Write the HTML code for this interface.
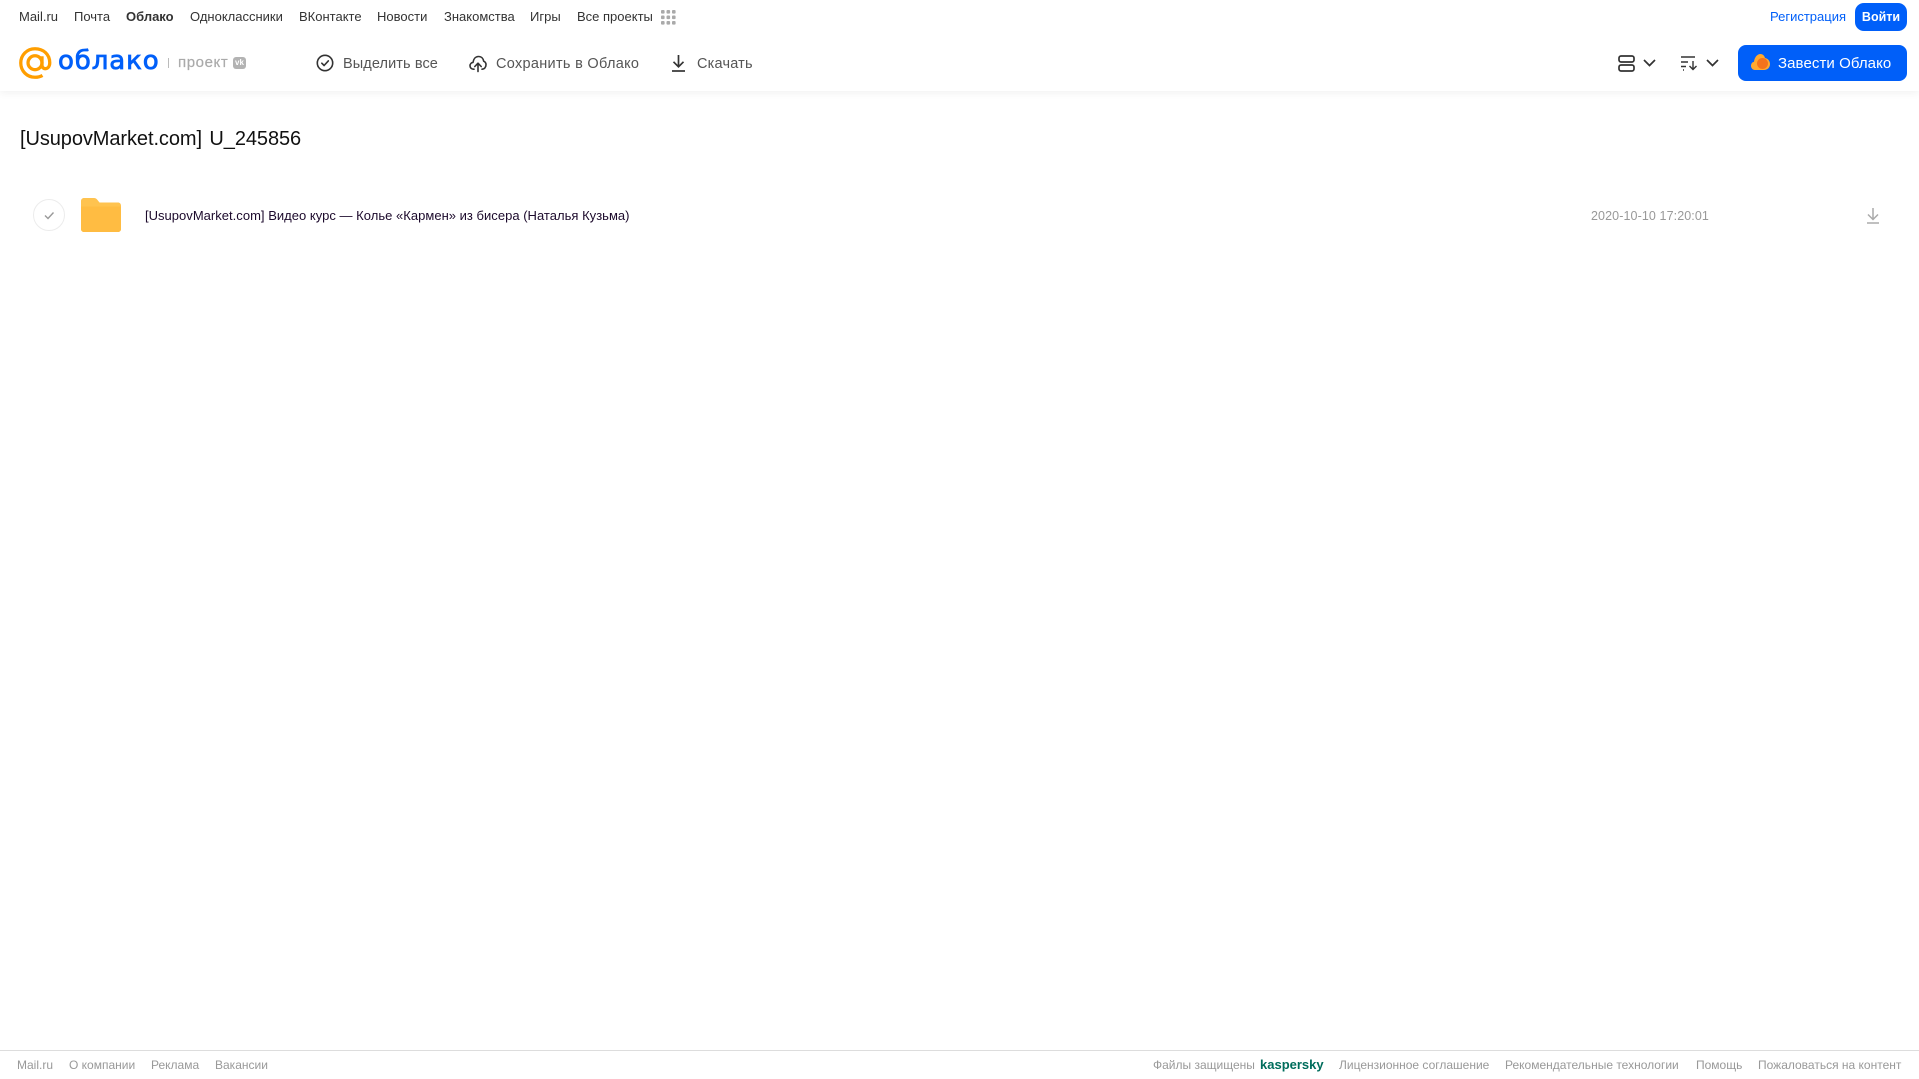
<!DOCTYPE html>
<html lang="ru"><head><meta charset="utf-8"><title>Облако</title>
<style>
html,body{margin:0;padding:0;background:#fff;width:1919px;height:1079px;overflow:hidden}
body{font-family:"Liberation Sans",sans-serif;position:relative}
.t{position:absolute;white-space:nowrap;line-height:18px}
.n{top:8px;font-size:13px;color:#333}
.a{top:55px;font-size:14.5px;color:#555}
.f{top:1056px;font-size:12px;color:#999}
svg{position:absolute;overflow:visible}
</style></head><body>
<div style="position:absolute;left:0;top:0;width:1919px;height:91px;background:#fff;box-shadow:0 2px 8px rgba(0,0,0,.06)"></div>
<span class="t n" style="left:19px">Mail.ru</span>
<span class="t n" style="left:74px">Почта</span>
<span class="t n" style="left:126px;font-weight:bold">Облако</span>
<span class="t n" style="left:190px">Одноклассники</span>
<span class="t n" style="left:299px">ВКонтакте</span>
<span class="t n" style="left:377px">Новости</span>
<span class="t n" style="left:444px">Знакомства</span>
<span class="t n" style="left:530px">Игры</span>
<span class="t n" style="left:577px">Все проекты</span>
<svg style="left:661px;top:10px" width="15" height="15" fill="#aaa"><rect x="0" y="0" width="3.6" height="3.6" rx="1"/><rect x="5.5" y="0" width="3.6" height="3.6" rx="1"/><rect x="11" y="0" width="3.6" height="3.6" rx="1"/><rect x="0" y="5.5" width="3.6" height="3.6" rx="1"/><rect x="5.5" y="5.5" width="3.6" height="3.6" rx="1"/><rect x="11" y="5.5" width="3.6" height="3.6" rx="1"/><rect x="0" y="11" width="3.6" height="3.6" rx="1"/><rect x="5.5" y="11" width="3.6" height="3.6" rx="1"/><rect x="11" y="11" width="3.6" height="3.6" rx="1"/></svg>
<span class="t n" style="left:1770px;color:#005ff9">Регистрация</span>
<div style="position:absolute;left:1855px;top:3px;width:52px;height:28px;background:#005ff9;border-radius:9px;color:#fff;font-size:12.5px;font-weight:bold;line-height:28px;text-align:center">Войти</div>

<svg style="left:19px;top:47px" width="33" height="32" viewBox="0 0 34 33" fill="none" stroke="#ff9e00" stroke-width="3.4"><circle cx="16.5" cy="16.2" r="7.2"/><path d="M23.7 9.5v9.2c0 5.2 7.9 5.2 8-2.5C31.7 7.500 25 1.800 16.500 1.800 8.200 1.800 1.800 8.300 1.800 16.500c0 8.300 6.500 14.700 14.700 14.700 3 0 5.500-.6 7.700-1.900"/></svg>
<span class="t" style="left:58px;top:43px;font-size:26px;line-height:36px;color:#005ff9;font-family:'DejaVu Sans',sans-serif;letter-spacing:.9px;-webkit-text-stroke:.8px #005ff9">облако</span>
<div style="position:absolute;left:168px;top:58px;width:1px;height:10px;background:#bbb"></div>
<span class="t" style="left:178px;top:54px;font-size:15px;color:#aaa;letter-spacing:.6px;-webkit-text-stroke:.2px #aaa">проект</span>
<div style="position:absolute;left:233px;top:57px;width:13px;height:12px;border-radius:3px;background:#b3b3b3;color:#fff;font-size:8px;line-height:12px;text-align:center;font-weight:bold">vk</div>

<svg style="left:316px;top:54px" width="18" height="18" fill="none" stroke="#333" stroke-width="1.6"><circle cx="9" cy="9" r="7.7"/><path d="M5.800 9.200l2.300 2.300 4.200-4.600" stroke-linecap="round" stroke-linejoin="round"/></svg>
<span class="t a" style="left:343px;letter-spacing:.1px">Выделить все</span>
<svg style="left:469px;top:55px" width="18" height="17" fill="none" stroke="#333" stroke-width="1.6" stroke-linecap="round" stroke-linejoin="round"><path d="M5 14.200H4.500C2.500 14.200 1 12.700 1 10.800c0-1.800 1.300-3.200 3-3.400C4.500 4 6.500 1.500 9.500 1.500c2.800 0 4.800 2 5.200 4.800 1.400.5 2.300 2 2.300 3.500 0 2.400-1.500 4.400-4 4.400"/><path d="M9 16.500V8.500M5.800 11.500L9 8.200l3.200 3.300"/></svg>
<span class="t a" style="left:496px;letter-spacing:.3px">Сохранить в Облако</span>
<svg style="left:671px;top:54px" width="15" height="18" fill="none" stroke="#333" stroke-width="1.7"><path d="M7.500 1v11.500M2.500 7.800l5 5 5-5"/><path d="M1 17h13"/></svg>
<span class="t a" style="left:697px;letter-spacing:.2px">Скачать</span>

<svg style="left:1618px;top:55px" width="17" height="17" fill="none" stroke="#333" stroke-width="1.7"><rect x="1" y="1" width="15" height="6" rx="2"/><rect x="1" y="10" width="15" height="6" rx="2"/></svg>
<svg style="left:1643px;top:59px" width="13" height="8" fill="none" stroke="#333" stroke-width="1.7"><path d="M1 1l5.500 5.500L12 1"/></svg>
<svg style="left:1681px;top:56px" width="17" height="15" fill="none" stroke="#333" stroke-width="1.4"><path d="M0 1h14M0 6h7M0 10.500h5M2 14h1"/><path d="M12 5v8.500M8.500 10l3.500 3.500 3.500-3.500"/></svg>
<svg style="left:1706px;top:59px" width="13" height="8" fill="none" stroke="#333" stroke-width="1.7"><path d="M1 1l5.500 5.500L12 1"/></svg>
<div style="position:absolute;left:1738px;top:45px;width:169px;height:36px;background:#005ff9;border-radius:8px"></div>
<svg style="left:1751px;top:54px" width="19" height="17"><path d="M4 16C1.500 16 0 14 0 11.800 0 9.800 1.200 8.200 3 7.800 3.500 3.500 6 0 9.500 0c2.500 0 4 2 4.500 4 2.800.5 5 2.800 5 6 0 3.500-2.500 6-6 6z" fill="#ffa930"/><circle cx="11.500" cy="9.500" r="5.500" fill="#f4731c"/></svg>
<span class="t" style="left:1778px;top:55px;font-size:15px;color:#fff;letter-spacing:.08px">Завести Облако</span>

<span class="t" style="left:20px;top:125px;font-size:20px;line-height:28px;color:#111;letter-spacing:-.08px;word-spacing:2px">[UsupovMarket.com] U_245856</span>

<svg style="left:33px;top:199px" width="32" height="32" fill="none"><circle cx="16" cy="16" r="15.500" stroke="#ececec"/><path d="M12 16.500l3 3 5.500-6" stroke="#999" stroke-width="1.400"/></svg>
<svg style="left:81px;top:198px" width="40" height="34"><path d="M0 3C0 1.300 1.300 0 3 0h10c1.500 0 2.500.8 3.500 2l2 2.500H37c1.700 0 3 1.300 3 3V31c0 1.700-1.300 3-3 3H3c-1.700 0-3-1.300-3-3z" fill="#ffc34f"/><path d="M0 8.500h40V31c0 1.700-1.300 3-3 3H3c-1.700 0-3-1.300-3-3z" fill="#ffbc42"/></svg>
<span class="t" style="left:145px;top:207px;font-size:13px;color:#1c0a2c;letter-spacing:.02px">[UsupovMarket.com] Видео курс — Колье «Кармен» из бисера (Наталья Кузьма)</span>
<span class="t" style="left:1591px;top:207px;font-size:12.5px;color:#999;letter-spacing:.1px">2020-10-10 17:20:01</span>
<svg style="left:1866px;top:207px" width="14" height="17" fill="none" stroke="#aaa" stroke-width="1.500"><path d="M7 1v11M2 7.500l5 5 5-5"/><path d="M1 16h12"/></svg>

<div style="position:absolute;left:0;top:1050px;width:1919px;height:1px;background:#ddd"></div>
<span class="t f" style="left:17px">Mail.ru</span>
<span class="t f" style="left:69px">О компании</span>
<span class="t f" style="left:151px">Реклама</span>
<span class="t f" style="left:215px">Вакансии</span>
<span class="t f" style="left:1153px">Файлы защищены</span>
<span class="t f" style="left:1260px;font-size:13px;font-weight:bold;color:#006d5c">kaspersky</span>
<span class="t f" style="left:1339px">Лицензионное соглашение</span>
<span class="t f" style="left:1505px">Рекомендательные технологии</span>
<span class="t f" style="left:1696px">Помощь</span>
<span class="t f" style="left:1758px">Пожаловаться на контент</span>
</body></html>
